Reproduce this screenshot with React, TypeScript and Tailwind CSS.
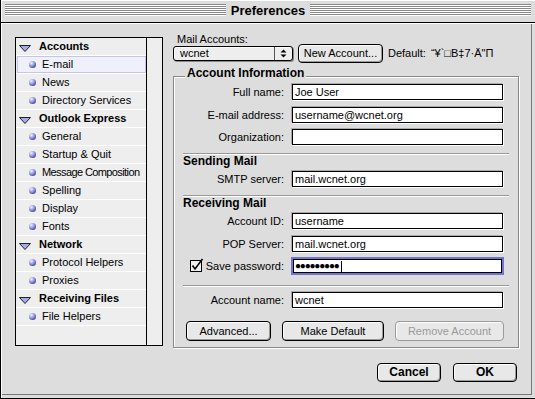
import React from "react";

type Row = { t: string; h?: boolean; sel?: boolean; tight?: boolean };

const rows: Row[] = [
  { t: "Accounts", h: true },
  { t: "E-mail", sel: true },
  { t: "News" },
  { t: "Directory Services" },
  { t: "Outlook Express", h: true },
  { t: "General" },
  { t: "Startup & Quit" },
  { t: "Message Composition", tight: true },
  { t: "Spelling" },
  { t: "Display" },
  { t: "Fonts" },
  { t: "Network", h: true },
  { t: "Protocol Helpers" },
  { t: "Proxies" },
  { t: "Receiving Files", h: true },
  { t: "File Helpers" },
];

function Bullet() {
  return (
    <div className="w-[7px] h-[7px] shrink-0 rounded-full bg-[radial-gradient(circle_at_35%_30%,#f4f4ff_0%,#9a9ae6_40%,#4a4aa0_75%,#22225a_100%)]" />
  );
}

function Tri() {
  return (
    <svg width="12" height="7" viewBox="0 0 12 7" className="shrink-0 mt-[4px]">
      <polygon points="0.5,0.5 11.5,0.5 6,6.5" fill="#a8a8f0" stroke="#222" strokeWidth="1" />
    </svg>
  );
}

function Sidebar() {
  return (
    <div className="mt-[4px] w-[148px] h-[309px] border border-black flex bg-[#eeeeee] shrink-0">
      <div className="w-[130px] flex flex-col overflow-hidden">
        {rows.map((r) => (
          <div key={r.t} className="h-[18px] border-b border-white flex whitespace-nowrap">
            {r.h ? (
              <div className="flex-1 flex items-center pl-[3px]">
                <Tri />
                <span className="ml-[8px] font-bold text-[11px]">{r.t}</span>
              </div>
            ) : r.sel ? (
              <div className="flex-1 flex items-center pl-[11px] ml-px border border-[#c4c4ec] bg-[#f0f0fa]">
                <Bullet />
                <span className="ml-[6px]">{r.t}</span>
              </div>
            ) : (
              <div className="flex-1 flex items-center pl-[13px]">
                <Bullet />
                <span className={r.tight ? "ml-[6px] tracking-[-0.6px]" : "ml-[6px]"}>{r.t}</span>
              </div>
            )}
          </div>
        ))}
      </div>
      <div className="flex-1 border-l border-black bg-[#eeeeee]" />
    </div>
  );
}

function Btn({
  children,
  cls,
  disabled,
}: {
  children: React.ReactNode;
  cls: string;
  disabled?: boolean;
}) {
  return (
    <div
      className={`flex items-center justify-center whitespace-nowrap rounded-[4px] border bg-[#e8e8e8] ${
        disabled
          ? "border-[#9a9a9a] text-[#9a9a9a] shadow-[inset_1px_1px_0_#fff]"
          : "border-black shadow-[inset_1px_1px_0_#fff,inset_-1px_-1px_0_#9a9a9a]"
      } ${cls}`}
    >
      {children}
    </div>
  );
}

function Field({
  label,
  value,
  cls,
}: {
  label: React.ReactNode;
  value: string;
  cls: string;
}) {
  return (
    <div className={`flex items-center h-[16px] whitespace-nowrap ${cls}`}>
      <div className="w-[101px] flex justify-end items-center">{label}</div>
      <div className="ml-[8px] w-[211px] h-[16px] border border-black bg-white pl-[2px] flex items-center shadow-[-1px_-1px_0_#aaa,1px_1px_0_#fff]">
        {value}
      </div>
    </div>
  );
}

function Sep({ cls }: { cls: string }) {
  return <div className={`h-[2px] border-t border-t-[#999] border-b border-b-white ${cls}`} />;
}

function Checkbox() {
  return (
    <svg width="14" height="14" viewBox="0 0 14 14" className="shrink-0 -mt-[2px]">
      <rect x="0.5" y="2.5" width="11" height="11" fill="#eeeeee" stroke="#000" />
      <path d="M2.5 7.5 L5 11 L12.5 1" fill="none" stroke="#000" strokeWidth="1.6" />
    </svg>
  );
}

export default function App() {
  return (
    <div className="w-[535px] h-[399px] bg-[#dddddd] border-l border-b border-black flex flex-col overflow-hidden text-[11px] leading-[13px] text-black font-['Liberation_Sans',Arial,sans-serif]">
      {/* Title bar */}
      <div className="h-[23px] shrink-0 border-b border-black flex pl-[4px] pr-[4px] shadow-[inset_1px_1px_0_#fff]">
        <div className="flex-1 h-[12px] mt-[4px] bg-[repeating-linear-gradient(to_bottom,#888_0px,#888_1px,#fff_1px,#fff_2px)]" />
        <div className="px-[5px] text-[13px] font-bold leading-[21px]">Preferences</div>
        <div className="flex-1 h-[12px] mt-[4px] bg-[repeating-linear-gradient(to_bottom,#888_0px,#888_1px,#fff_1px,#fff_2px)]" />
      </div>

      {/* Content */}
      <div className="flex-1 flex flex-col shadow-[inset_1px_1px_0_#fff,inset_-3px_-3px_0_#ddd,inset_-4px_-4px_0_#777]">
        <div className="flex pt-[10px] pl-[14px]">
          <Sidebar />
          <div className="ml-[10px] w-[346px] flex flex-col">
            <div className="pl-[4px] h-[12px] leading-[12px]">Mail Accounts:</div>
            <div className="flex items-center h-[19px] -mt-px whitespace-nowrap">
              <div className="w-[120px] h-[15px] rounded-[3px] border border-black bg-[#eeeeee] shadow-[1px_1px_0_#888,inset_1px_1px_0_#fff] flex">
                <div className="flex-1 pl-[6px] flex items-center">wcnet</div>
                <div className="w-[18px] border-l border-[#555] flex items-center justify-center">
                  <svg width="7" height="9" viewBox="0 0 7 9">
                    <polygon points="3.5,0.5 6.5,3.5 0.5,3.5" fill="#000" />
                    <polygon points="0.5,5.5 6.5,5.5 3.5,8.5" fill="#000" />
                  </svg>
                </div>
              </div>
              <Btn cls="ml-[5px] w-[85px] h-[19px]">New Account...</Btn>
              <span className="ml-[5px]">Default:</span>
              <span className="ml-[5px]">{"“¥`□B‡7·Ä\"Π"}</span>
            </div>

            {/* Group box */}
            <div className="mt-[13px] relative h-[272px] border border-[#888] shadow-[inset_1px_1px_0_#fff,1px_1px_0_#fff] flex flex-col pl-[9px] pr-[9px]">
              <div className="absolute -top-[11px] left-[11px] px-[2px] bg-[#dddddd] font-bold text-[12px] leading-[14px] whitespace-nowrap">
                Account Information
              </div>
              <Field cls="mt-[7px]" label="Full name:" value="Joe User" />
              <Field cls="mt-[7px]" label="E-mail address:" value="username@wcnet.org" />
              <Field cls="mt-[6px]" label="Organization:" value="" />
              <Sep cls="mt-[8px]" />
              <div className="h-[13px] leading-[13px] font-bold text-[12px]">Sending Mail</div>
              <Field cls="mt-[3px]" label="SMTP server:" value="mail.wcnet.org" />
              <Sep cls="mt-[8px]" />
              <div className="h-[13px] leading-[13px] font-bold text-[12px]">Receiving Mail</div>
              <Field cls="mt-[3px]" label="Account ID:" value="username" />
              <Field cls="mt-[7px]" label="POP Server:" value="mail.wcnet.org" />
              <div className="flex items-center h-[18px] mt-[5px] whitespace-nowrap">
                <div className="w-[101px] flex justify-end items-center">
                  <Checkbox />
                  <span className="ml-[2px]">Save password:</span>
                </div>
                <div className="ml-[7px] w-[213px] h-[18px] border-2 border-[#7474cc] bg-white">
                  <div className="h-full border border-black flex items-center pl-[1px]">
                    <span className="tracking-[-1.2px] text-[10px] leading-[10px]">●●●●●●●●●</span>
                    <span className="ml-[2px] w-px h-[11px] bg-black" />
                  </div>
                </div>
              </div>
              <Sep cls="mt-[10px]" />
              <Field cls="mt-[5px]" label="Account name:" value="wcnet" />
              <div className="flex mt-[13px] pl-[3px]">
                <Btn cls="w-[85px] h-[20px]">Advanced...</Btn>
                <Btn cls="ml-[11px] w-[102px] h-[20px]">Make Default</Btn>
                <Btn cls="ml-[11px] w-[109px] h-[20px]" disabled>
                  Remove Account
                </Btn>
              </div>
            </div>
          </div>
        </div>

        <div className="flex justify-end pr-[18px] mt-[15px]">
          <Btn cls="w-[64px] h-[19px] font-bold text-[12px]">Cancel</Btn>
          <Btn cls="ml-[12px] w-[64px] h-[19px] font-bold text-[12px]">OK</Btn>
        </div>
      </div>
    </div>
  );
}
